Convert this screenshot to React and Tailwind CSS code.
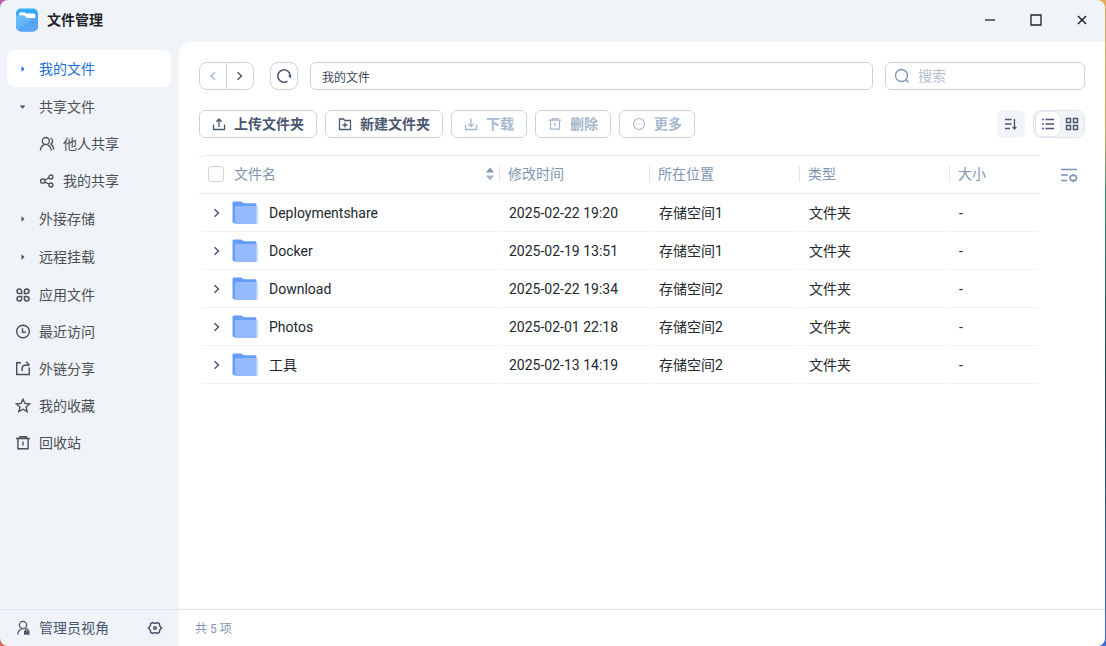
import React, { useState } from 'react';

const files = [
    { name: 'Deploymentshare', time: '2025-02-22 19:20', place: '存储空间1' },
    { name: 'Docker', time: '2025-02-19 13:51', place: '存储空间1' },
    { name: 'Download', time: '2025-02-22 19:34', place: '存储空间2' },
    { name: 'Photos', time: '2025-02-01 22:18', place: '存储空间2' },
    { name: '工具', time: '2025-02-13 14:19', place: '存储空间2' },
];

// Outline icon base, strokes follow the text colour
const Icon = ({ size = 16, className = '', width = 1.3, children }) => (
    <svg width={size} height={size} viewBox={`0 0 ${size} ${size}`} fill="none" stroke="currentColor" strokeWidth={width} className={`shrink-0 ${className}`} aria-hidden="true">
        {children}
    </svg>
);

const AppLogo = () => (
    <svg width="24" height="24" viewBox="0 0 24 24" className="shrink-0" aria-hidden="true">
        <defs>
            <linearGradient id="logoBack" x1="0" y1="0" x2="0" y2="1">
                <stop offset="0" stopColor="#38aef8" />
                <stop offset="1" stopColor="#2f8fee" />
            </linearGradient>
            <linearGradient id="logoFront" x1="0" y1="0" x2="1" y2="1">
                <stop offset="0" stopColor="#6cc0fb" />
                <stop offset="0.5" stopColor="#62b2f9" />
                <stop offset="0.5" stopColor="#54a3f4" />
                <stop offset="1" stopColor="#5ca9f5" />
            </linearGradient>
        </defs>
        <rect x="1" y="0.5" width="22" height="23" rx="5" fill="url(#logoBack)" />
        <path d="M4 6a1.800 1.800 0 0 1 1.800-1.700h3.700l2 1.300h7a2 2 0 0 1 2 2V11H10L4 7.600z" fill="#fff" />
        <path d="M1 7.300h7.500c1.600 0 2 2.600 4 2.600h8c1.500 0 2.500-.5 2.500-.5V18.500a5 5 0 0 1-5 5H6a5 5 0 0 1-5-5z" fill="url(#logoFront)" />
    </svg>
);

const FolderIcon = () => (
    <svg width="26" height="24" viewBox="0 0 26 24" className="shrink-0" aria-hidden="true">
        <path d="M.5 2A1.500 1.500 0 0 1 2 .5h6.500c1.500 0 2.500 1.700 4 1.700H23a1.500 1.500 0 0 1 1.500 1.500V22H2A1.500 1.500 0 0 1 .5 20.500z" fill="#659df8" />
        <path d="M4 5h20.500a1 1 0 0 1 1 1v15.500a1.500 1.500 0 0 1-1.500 1.500H2.500c.3-.5.5-1 .5-1.500V6a1 1 0 0 1 1-1z" fill="#94bafb" />
        <path d="M24.300 5h.7a.8.8 0 0 1 .8.800v15.700a1.500 1.500 0 0 1-1.500 1.500z" fill="#c9dcfc" />
    </svg>
);

const TriangleRight = () => (
    <svg width="8" height="8" viewBox="0 0 8 8" fill="currentColor" className="shrink-0" aria-hidden="true"><path d="M2.500 1.200 5.500 4l-3 2.800z" /></svg>
);
const TriangleDown = () => (
    <svg width="8" height="8" viewBox="0 0 8 8" fill="currentColor" className="shrink-0" aria-hidden="true"><path d="M.8 2.500h5.600L3.600 5.700z" /></svg>
);

const UsersIcon = () => (
    <Icon>
        <circle cx="6.800" cy="5" r="3.500" />
        <path d="M1.300 14.500c.2-2.900 1.800-4.700 3.600-5.600M12.300 14.500c-.2-2.900-1.800-4.700-3.600-5.600M11.500 2c1.500.7 2.200 1.800 2.200 3.100 0 1.400-.7 2.300-1.700 3 1.500 1 2.600 2.800 2.800 5.300" />
    </Icon>
);
const ShareNodesIcon = () => (
    <Icon>
        <circle cx="3.800" cy="8" r="2.200" />
        <circle cx="11.900" cy="4" r="2" />
        <circle cx="11.900" cy="12" r="2" />
        <path d="m5.800 7 4.200-2.200M5.800 9l4.200 2.200" />
    </Icon>
);
const AppsIcon = () => (
    <Icon width={1.500}>
        <path d="M6.600 4.300v2.300H4.300A2.300 2.300 0 1 1 6.600 4.300zM9.400 4.300v2.300h2.300a2.300 2.300 0 1 0-2.300-2.300zM6.600 11.700V9.400H4.300a2.300 2.300 0 1 0 2.300 2.300zM9.400 11.700V9.400h2.300a2.300 2.300 0 1 1-2.300 2.300z" />
    </Icon>
);
const ClockIcon = () => (
    <Icon width={1.400}>
        <circle cx="8" cy="7.500" r="6.300" />
        <path d="M7.500 4.200v4h3.300" />
    </Icon>
);
const ExportIcon = () => (
    <Icon width={1.400}>
        <path d="M6 1.800H1.700v11.700h12.600V6.500M7.200 10V7.300c0-2 1-3.100 3-3.100h4" />
        <path d="m11 .8 3.500 3.300" />
    </Icon>
);
const StarIcon = () => (
    <Icon width={1.400}>
        <path d="m8 1.200 1.900 4.200 4.700.5-3.500 3.100 1 4.600L8 11.200l-4.100 2.400 1-4.600L1.400 5.900l4.700-.5z" />
    </Icon>
);
const TrashIcon = ({ size = 16 }) => (
    <svg width={size} height={size} viewBox="0 0 16 16" fill="none" stroke="currentColor" strokeWidth="1.400" className="shrink-0" aria-hidden="true">
        <path d="M1 3.500h14M4.500 1.800h7v1.500M4.500 3.300V1.800M2.900 3.500v10.300h10.200V3.500M8 6.500v4" />
    </svg>
);
const ChevronRight = () => (
    <Icon size={10} width={1.500}><path d="m2.500 1.200 4 3.800-4 3.800" /></Icon>
);

const ToolButton = ({ icon, label, disabled }) => (
    <button
        disabled={disabled}
        className="flex h-7 items-center gap-2 whitespace-nowrap rounded-md border border-[#c8d4e1] px-3 text-sm font-bold text-[#4b5670] disabled:text-[#a8b8cd]"
    >
        {icon}
        {label}
    </button>
);

const NavItem = ({ icon, label, active, child, onClick }) => (
    <a
        href="#"
        onClick={onClick}
        className={`flex h-[37px] items-center gap-2 rounded-lg text-sm ${child ? 'pl-8' : 'pl-2'} ${active ? 'bg-white text-[#1a6fe0]' : 'text-[#4b4f56]'}`}
    >
        <span className="flex w-4 justify-center">{icon}</span>
        {label}
    </a>
);

const HeadCell = ({ label }) => (
    <th className="border-y border-[#e3e7ee] p-0 pb-0.5 font-normal">
        <div className="flex h-4 items-center border-l border-[#e0e5ec] pl-2">{label}</div>
    </th>
);

const Cell = ({ children }) => (
    <td className="p-0">
        <div className="ml-0.5 flex h-[38px] items-center whitespace-nowrap border-b border-[#f0f2f5] pl-2">{children}</div>
    </td>
);

const App = () => {
    const [active, setActive] = useState('我的文件');
    const [path, setPath] = useState('我的文件');
    const [search, setSearch] = useState('');

    const item = (label, icon, child) => (
        <NavItem label={label} icon={icon} child={child} active={active === label} onClick={() => setActive(label)} />
    );

    return (
        <div className="min-h-screen bg-[linear-gradient(#b35bb5,#d9694a)] font-['Roboto','Noto_Sans_CJK_SC',sans-serif]">
            <div className="bg-[linear-gradient(90deg,transparent_50%,#f0b060_50%)]">
                <div className="bg-[linear-gradient(#e8a95c,#d8b060_20%,#2f8a6a_30%,#1c4a66_60%,#3d6fd0)] bg-[length:50%_100%] bg-right bg-no-repeat pr-px">
                    <div className="flex min-h-screen flex-col overflow-hidden rounded-lg bg-[#f0f4f9]">
                        <header className="flex h-[42px] items-start justify-between pl-[15px]">
                            <div className="flex h-10 items-center gap-2">
                                <AppLogo />
                                <h1 className="text-sm font-bold text-[#1f2329]">文件管理</h1>
                            </div>
                            <div className="flex h-10 text-[#1f2329]">
                                <button aria-label="最小化" className="flex w-[46px] items-center justify-center">
                                    <Icon size={12}><path d="M1 6h10" /></Icon>
                                </button>
                                <button aria-label="最大化" className="flex w-[46px] items-center justify-center">
                                    <Icon size={12}><path d="M1 1h10v10H1z" /></Icon>
                                </button>
                                <button aria-label="关闭" className="flex w-[46px] items-center justify-center">
                                    <Icon size={12} width={1.500}><path d="m2 2 8 8M10 2l-8 8" /></Icon>
                                </button>
                            </div>
                        </header>

                        <div className="flex flex-1">
                            <aside className="flex w-[179px] shrink-0 flex-col">
                                <nav className="flex flex-1 flex-col gap-px py-2 pl-[7px] pr-2">
                                    {item('我的文件', <TriangleRight />)}
                                    <div>
                                        {item('共享文件', <TriangleDown />)}
                                        {item('他人共享', <UsersIcon />, true)}
                                        {item('我的共享', <ShareNodesIcon />, true)}
                                    </div>
                                    {item('外接存储', <TriangleRight />)}
                                    {item('远程挂载', <TriangleRight />)}
                                    <div>
                                        {item('应用文件', <AppsIcon />)}
                                        {item('最近访问', <ClockIcon />)}
                                        {item('外链分享', <ExportIcon />)}
                                        {item('我的收藏', <StarIcon />)}
                                        {item('回收站', <TrashIcon />)}
                                    </div>
                                </nav>
                                <div className="flex h-[37px] items-center justify-between border-t border-[#e2e6ec] pl-[15px] pr-4 text-sm text-[#4b5670]">
                                    <button className="flex items-center gap-2">
                                        <Icon>
                                            <circle cx="8" cy="5" r="3.600" />
                                            <path d="M2.700 14.500c.2-2.700 1.600-4.600 3.800-5.800" />
                                            <path d="M9 10.800h5.500v3.900H9z" fill="currentColor" stroke="none" />
                                            <path d="M10.400 11V10.200a1.300 1.300 0 0 1 2.700 0v.8" />
                                        </Icon>
                                        管理员视角
                                    </button>
                                    <button aria-label="设置">
                                        <Icon width={1.500}>
                                            <path d="M5.400 2.500 7 3.200h2l1.600-.7 1.800 1.100.1 1.700 1 1.700 1.200 1-1.200 1-1 1.700-.1 1.700-1.800 1.100L9 12.800H7l-1.600.7-1.800-1.100-.1-1.700-1-1.700L1.300 8l1.200-1 1-1.700.1-1.700z" />
                                            <circle cx="8" cy="8" r="1.300" />
                                        </Icon>
                                    </button>
                                </div>
                            </aside>

                            <main className="flex min-w-0 flex-1 flex-col rounded-tl-xl bg-white">
                                <div className="flex-1 px-5 pt-5">
                                    <div className="flex items-center gap-3">
                                        <div className="mr-1 flex h-7 w-[55px] rounded-lg border border-[#c8d4e1] text-[#4b5670]">
                                            <button disabled aria-label="后退" className="flex flex-1 items-center justify-center disabled:text-[#a8b8cd]">
                                                <Icon size={10} width={1.500}><path d="M7 1.200 3 5l4 3.800" /></Icon>
                                            </button>
                                            <button aria-label="前进" className="flex flex-1 items-center justify-center border-l border-[#c8d4e1]">
                                                <ChevronRight />
                                            </button>
                                        </div>
                                        <button aria-label="刷新" className="flex size-7 items-center justify-center rounded-lg border border-[#c8d4e1] text-[#4b5670]">
                                            <Icon width={1.500}>
                                                <path d="M11.500 13.100A6.200 6.200 0 1 1 14.200 8" />
                                                <path d="M11.800 7.500h3.500l-.6 3z" fill="currentColor" stroke="none" />
                                            </Icon>
                                        </button>
                                        <input
                                            aria-label="路径"
                                            value={path}
                                            onChange={(e) => setPath(e.target.value)}
                                            className="h-7 min-w-0 flex-1 rounded-md border border-[#c8d4e1] px-[11px] text-xs text-[#3d4658] outline-none"
                                        />
                                        <label className="flex h-7 w-[200px] items-center gap-2 rounded-md border border-[#c8d4e1] px-2 text-[#7f94b3]">
                                            <Icon width={1.400}>
                                                <circle cx="7.500" cy="7.500" r="6" />
                                                <path d="m12 12 2.500 2.500" />
                                            </Icon>
                                            <input
                                                aria-label="搜索"
                                                placeholder="搜索"
                                                value={search}
                                                onChange={(e) => setSearch(e.target.value)}
                                                className="min-w-0 flex-1 text-sm text-[#3d4658] outline-none placeholder:text-[#b4c0d0]"
                                            />
                                        </label>
                                    </div>

                                    <div className="mt-5 flex items-center justify-between">
                                        <div className="flex gap-2">
                                            <ToolButton label="上传文件夹" icon={<Icon size={14}><path d="M1.500 7.500v5h11v-5M7 10V2.500M4.300 4.800 7 2l2.700 2.800" /></Icon>} />
                                            <ToolButton label="新建文件夹" icon={<Icon size={14}><path d="M1.500 2h4l1.300 1.500h5.700v9h-11zM7 5.500v5M4.500 8h5" /></Icon>} />
                                            <ToolButton disabled label="下载" icon={<Icon size={14}><path d="M1.500 7.500v5h11v-5M7 1.500V9M4.300 6.700 7 9.500l2.700-2.800" /></Icon>} />
                                            <ToolButton disabled label="删除" icon={<TrashIcon size={14} />} />
                                            <ToolButton
                                                disabled
                                                label="更多"
                                                icon={
                                                    <Icon size={14} width={1.200}>
                                                        <circle cx="7" cy="7" r="5.500" />
                                                        <path d="M3.800 7H5M6.400 7h1.200M9 7h1.200" />
                                                    </Icon>
                                                }
                                            />
                                        </div>
                                        <div className="flex gap-2 text-[#4b5670]">
                                            <button aria-label="排序" className="flex size-7 items-center justify-center rounded-md bg-[#f2f4f7]">
                                                <Icon size={14}><path d="M1 2.500h6.500M1 7h6.500M1 11.500h5M10.500 2v10M8.700 9.800l1.800 2.200 1.800-2.200" /></Icon>
                                            </button>
                                            <div className="flex h-7 w-[52px] items-center rounded-lg border border-[#e0e4eb] bg-[#f2f4f7] pl-px pr-0.5">
                                                <button aria-label="列表视图" className="flex h-[26px] w-[26px] items-center justify-center rounded-lg border border-[#e3e7ee] bg-white">
                                                    <Icon size={14} width={1.500}><path d="M1 2.500h1.800M4.500 2.500H13M1 7h1.800M4.500 7H13M1 11.500h1.800M4.500 11.500H13" /></Icon>
                                                </button>
                                                <button aria-label="网格视图" className="flex flex-1 items-center justify-center">
                                                    <Icon size={14} width={1.500}><path d="M1.500 1.500h4v4h-4zM8.500 1.500h4v4h-4zM1.500 8.500h4v4h-4zM8.500 8.500h4v4h-4z" /></Icon>
                                                </button>
                                            </div>
                                        </div>
                                    </div>

                                    <div className="mt-[17px] flex items-start">
                                        <table className="min-w-0 flex-1 table-fixed border-separate border-spacing-0 text-left text-sm text-[#23272e]">
                                            <colgroup>
                                                <col />
                                                <col className="w-[150px]" />
                                                <col className="w-[150px]" />
                                                <col className="w-[150px]" />
                                                <col className="w-[90px]" />
                                            </colgroup>
                                            <thead>
                                                <tr className="h-[39px] text-[#8095b3]">
                                                    <th className="rounded-tl-md border-y border-[#e3e7ee] p-0 pb-0.5 font-normal">
                                                        <div className="flex items-center justify-between pl-[9px] pr-[5px]">
                                                            <label className="flex items-center gap-[10px]">
                                                                <input type="checkbox" className="size-4 appearance-none rounded border border-[#c8d4e1] bg-white" />
                                                                文件名
                                                            </label>
                                                            <svg width="8" height="14" viewBox="0 0 8 14" aria-hidden="true">
                                                                <path d="M0 5.500 4 .5l4 5z" fill="#7f94b3" />
                                                                <path d="M0 8.500h8l-4 5z" fill="#a3b4ca" />
                                                            </svg>
                                                        </div>
                                                    </th>
                                                    <HeadCell label="修改时间" />
                                                    <HeadCell label="所在位置" />
                                                    <HeadCell label="类型" />
                                                    <HeadCell label="大小" />
                                                </tr>
                                            </thead>
                                            <tbody>
                                                {files.map((file) => (
                                                    <tr key={file.name}>
                                                        <Cell>
                                                            <button aria-label="展开" className="ml-[3px] mr-[10px] text-[#4b5670]"><ChevronRight /></button>
                                                            <FolderIcon />
                                                            <span className="ml-[11px]">{file.name}</span>
                                                        </Cell>
                                                        <Cell>{file.time}</Cell>
                                                        <Cell>{file.place}</Cell>
                                                        <Cell>文件夹</Cell>
                                                        <Cell>-</Cell>
                                                    </tr>
                                                ))}
                                            </tbody>
                                        </table>
                                        <button aria-label="列设置" className="flex h-10 w-[46px] items-center justify-center pl-[14px] text-[#7f94b3]">
                                            <Icon size={18} width={1.400}>
                                                <path d="M1 3.500h16M1 9h7M1 14.500h6" />
                                                <path d="m13.300 8.500.9 1.200 1.500-.1.500 1.300.6 1.100-.6 1.100-.5 1.300-1.500-.1-.9 1.200-.9-1.200-1.500.1-.5-1.300-.6-1.100.6-1.100.5-1.300 1.500.1z" strokeWidth="1.600" />
                                            </Icon>
                                        </button>
                                    </div>
                                </div>
                                <footer className="flex h-[37px] items-center border-t border-[#e2e6ec] pl-4 pt-px text-xs text-[#8095b3]">共 {files.length} 项</footer>
                            </main>
                        </div>
                    </div>
                </div>
            </div>
        </div>
    );
};

export default App;
